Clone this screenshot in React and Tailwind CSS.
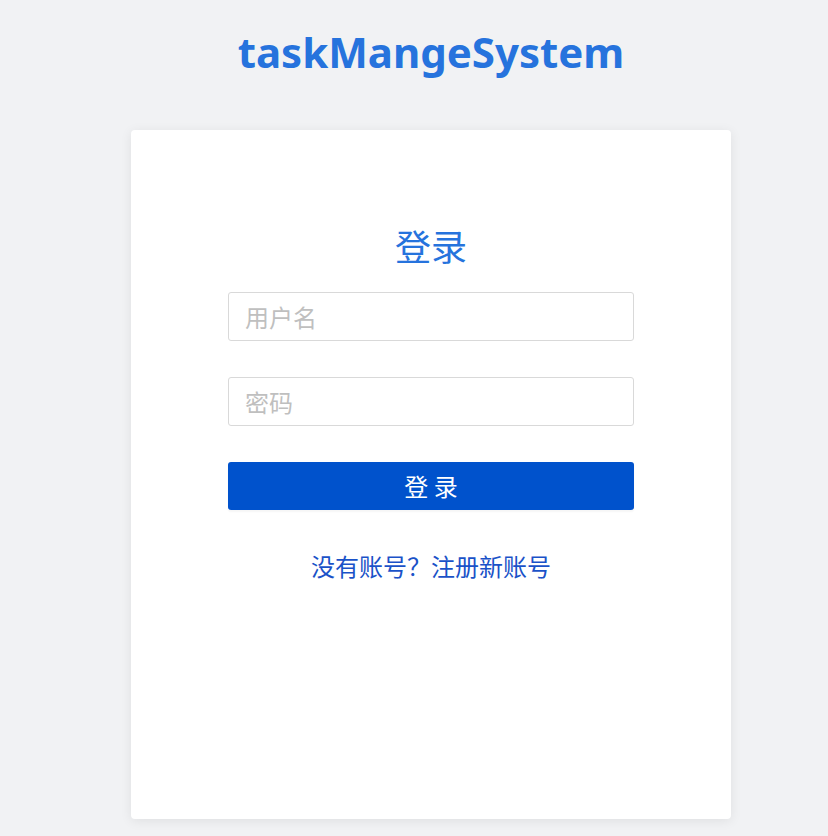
export default function App() {
  const font = { fontFamily: '"Noto Sans", "Noto Sans CJK SC", sans-serif' };
  const cjk = { fontFamily: '"Noto Sans CJK SC", sans-serif' };
  return (
    <div className="min-h-[836px] bg-[#f1f2f4] flex flex-col items-center pl-[34px]" style={font}>
      <h1 className="mt-[23px] text-[42px] leading-[58px] font-bold text-[#2673dd]">taskMangeSystem</h1>
      <div className="mt-[49px] w-[600px] h-[689px] bg-white rounded-[4px] shadow-[0_2px_12px_rgba(0,0,0,0.08)] flex flex-col items-center">
        <h2 className="mt-[91px] text-[36px] leading-[48px] text-[#2673dd] font-normal" style={cjk}>登录</h2>
        <div className="mt-[23px] w-[406px] flex flex-col" style={cjk}>
          <input
            className="h-[49px] w-full border border-[#d9d9d9] rounded-[3px] px-[16px] text-[24px] outline-none placeholder:text-[#bfbfbf]"
            placeholder="用户名"
          />
          <input
            type="password"
            className="mt-[36px] h-[49px] w-full border border-[#d9d9d9] rounded-[3px] px-[16px] text-[24px] outline-none placeholder:text-[#bfbfbf]"
            placeholder="密码"
          />
          <button className="mt-[36px] h-[48px] w-full bg-[#0052cc] rounded-[3px] text-white text-[24px] shadow-[0_2px_2px_rgba(0,0,0,0.04)]">
            登 录
          </button>
          <a className="mt-[38px] text-center text-[24px] leading-[36px] text-[#1a52c8]">没有账号？注册新账号</a>
        </div>
      </div>
    </div>
  );
}
